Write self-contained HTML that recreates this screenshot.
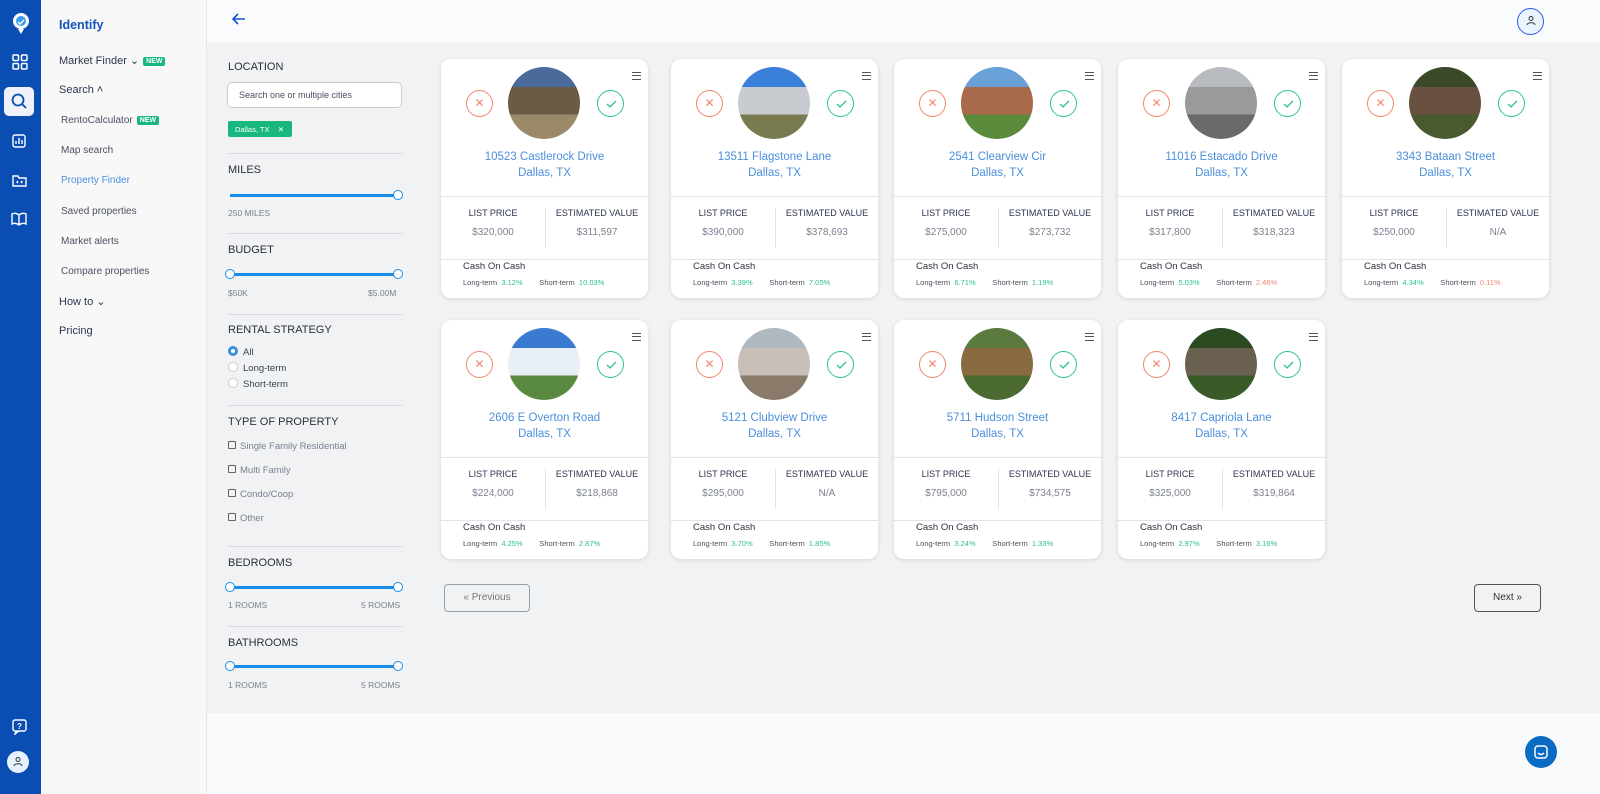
<!DOCTYPE html>
<html><head><meta charset="utf-8"><style>
*{box-sizing:border-box;margin:0;padding:0}
body{width:1600px;height:794px;overflow:hidden;font-family:"Liberation Sans",sans-serif;background:#f9fafc;position:relative}
.abs{position:absolute}
#rail{left:0;top:0;width:41px;height:794px;background:#0a4db3}
#side{left:41px;top:0;width:166px;height:794px;background:#f8f8f8;border-right:1px solid #e6e6e6}
#top{left:207px;top:0;width:1393px;height:43px;background:#fafbfc}
#main{left:207px;top:43px;width:1393px;height:670px;background:#f1f2f4}
.nav{position:absolute;left:18px;font-size:11px;color:#2b3650}
.sub{position:absolute;left:20px;font-size:10px;color:#4a5060}
.new{display:inline-block;background:#17b77e;color:#fff;font-size:7px;font-weight:bold;padding:1px 3px;border-radius:2px;vertical-align:middle;margin-left:4px}
.flt{position:absolute;left:228px;font-size:11px;color:#2a2f3a}
.hr{position:absolute;left:228px;width:174px;height:1px;background:#d9dbe0}
.sl{position:absolute;left:230px;width:168px;height:3px;background:#1a8de8}
.knob{position:absolute;width:10px;height:10px;border-radius:50%;background:#fff;border:1.5px solid #1a8de8}
.sm{position:absolute;font-size:8.5px;color:#7a7f8a}
.opt{position:absolute;left:228px;font-size:9.5px;color:#3a3f4a}
.rad{display:inline-block;width:10px;height:10px;border-radius:50%;border:1px solid #ccc;background:#fff;vertical-align:-1px;margin-right:5px}
.cb{display:inline-block;width:8px;height:8px;border:1px solid #666;border-radius:1px;vertical-align:0;margin-right:4px}
.card{position:absolute;width:207px;height:239px;background:#fff;border-radius:10px;box-shadow:0 1px 4px rgba(0,0,0,.12)}
.card .ph{position:absolute;left:67px;top:8px;width:72px;height:72px;border-radius:50%;background:linear-gradient(var(--c) 0 28%,var(--a) 28% 66%,var(--b) 66%)}
.card .x{position:absolute;left:25px;top:31px;width:27px;height:27px;border-radius:50%;border:1.3px solid #f0866e;color:#f0866e;font-size:12px;text-align:center;line-height:24px}
.card .ok{position:absolute;left:156px;top:31px;width:27px;height:27px;border-radius:50%;border:1.3px solid #2ec28e}
.card .ok svg{position:absolute;left:7px;top:7px}
.card .mn{position:absolute;left:191px;top:13px;width:9px;height:8px;border-top:1.3px solid #555;border-bottom:1.3px solid #555}
.card .mn:after{content:"";position:absolute;left:0;top:2.2px;width:9px;border-top:1.3px solid #555}
.card .ad{position:absolute;left:0;width:207px;top:90px;text-align:center;font-size:11.5px;line-height:16px;color:#4b8fdb}
.card .l1{position:absolute;left:0;width:207px;top:137px;height:1px;background:#e2e3e8}
.card .l2{position:absolute;left:0;width:207px;top:200px;height:1px;background:#e2e3e8}
.card .vd{position:absolute;left:104px;top:149px;width:1px;height:40px;background:#e2e3e8}
.card .lb{position:absolute;top:149px;font-size:9px;color:#2e3450;text-align:center}
.card .vl{position:absolute;top:168px;font-size:10px;color:#7c8190;text-align:center}
.card .cc{position:absolute;left:22px;top:202px;font-size:9.5px;color:#2e3240}
.card .lt{position:absolute;left:22px;top:219px;font-size:7.5px;color:#4a4f5a;white-space:nowrap}
.g{color:#2ebf8a}.r{color:#f0866e}
.btn{position:absolute;height:28px;border:1px solid #9aa0a8;border-radius:4px;background:#f1f2f4;font-size:10px;color:#777;text-align:center;line-height:26px}
</style></head><body>
<div id="rail" class="abs">
 <svg class="abs" style="left:11px;top:12px" width="20" height="24" viewBox="0 0 20 24"><circle cx="10" cy="9" r="8" fill="#fff"/><circle cx="10" cy="9" r="5" fill="#3a9be8"/><path d="M7 10l2 2 4-4" stroke="#fff" stroke-width="1.5" fill="none"/><path d="M7 17l3 5 3-5" fill="#fff"/></svg>
 <svg class="abs" style="left:12px;top:54px" width="16" height="16" fill="none" stroke="#fff" stroke-width="1.5"><rect x="1" y="1" width="5.5" height="5.5" rx="1"/><rect x="9.5" y="1" width="5.5" height="5.5" rx="1"/><rect x="1" y="9.5" width="5.5" height="5.5" rx="1"/><rect x="9.5" y="9.5" width="5.5" height="5.5" rx="1"/></svg>
 <div class="abs" style="left:4px;top:87px;width:30px;height:29px;background:#eef2f8;border-radius:5px"></div>
 <svg class="abs" style="left:11px;top:93px" width="16" height="16" fill="none" stroke="#0a4db3" stroke-width="1.8"><circle cx="7" cy="7" r="5.5"/><path d="M11 11l4 4"/></svg>
 <svg class="abs" style="left:12px;top:134px" width="14" height="14" fill="none" stroke="#fff" stroke-width="1.4"><rect x="1" y="1" width="12" height="12" rx="2"/><path d="M4 10V7M7 10V4M10 10V6"/></svg>
 <svg class="abs" style="left:12px;top:173px" width="15" height="14" fill="none" stroke="#fff" stroke-width="1.4"><path d="M1 3h5l1 2h7v8H1z"/><path d="M6 8l-1 1 1 1M9 8l1 1-1 1"/></svg>
 <svg class="abs" style="left:11px;top:212px" width="16" height="14" fill="none" stroke="#fff" stroke-width="1.4"><path d="M8 3C6 1 3 1 1 2v10c2-1 5-1 7 1 2-2 5-2 7-1V2c-2-1-5-1-7 1zM8 3v10"/></svg>
 <svg class="abs" style="left:12px;top:719px" width="15" height="16" fill="none" stroke="#fff" stroke-width="1.4"><rect x="1" y="1" width="13" height="11" rx="2"/><path d="M4 12l-1 3 4-3"/><text x="5" y="10" font-size="8" fill="#fff" stroke="none" font-family="Liberation Sans" font-weight="bold">?</text></svg>
 <div class="abs" style="left:7px;top:751px;width:22px;height:22px;border-radius:50%;background:#e6f2fd"></div>
 <svg class="abs" style="left:13px;top:756px" width="10" height="11" fill="none" stroke="#333" stroke-width="1"><circle cx="5" cy="3.5" r="2"/><path d="M1 10c0-3 8-3 8 0"/></svg>
</div>
<div id="side" class="abs">
 <div class="nav" style="top:18px;font-size:12.5px;color:#1451b8;font-weight:bold">Identify</div>
 <div class="nav" style="top:54px">Market Finder ⌄<span class="new">NEW</span></div>
 <div class="nav" style="top:84px">Search ˄</div>
 <div class="sub" style="top:115px">RentoCalculator<span class="new">NEW</span></div>
 <div class="sub" style="top:145px">Map search</div>
 <div class="sub" style="top:175px;color:#4b8fdb">Property Finder</div>
 <div class="sub" style="top:206px">Saved properties</div>
 <div class="sub" style="top:236px">Market alerts</div>
 <div class="sub" style="top:266px">Compare properties</div>
 <div class="nav" style="top:295px">How to ⌄</div>
 <div class="nav" style="top:325px">Pricing</div>
</div>
<div id="top" class="abs">
 <svg class="abs" style="left:25px;top:13px" width="14" height="12" fill="none" stroke="#1451d8" stroke-width="1.6"><path d="M13 6H2M6 1L1 6l5 5"/></svg>
 <div class="abs" style="left:1310px;top:8px;width:27px;height:27px;border-radius:50%;border:1.2px solid #2a5ee0;background:#eaf4fe"></div>
 <svg class="abs" style="left:1319px;top:15px" width="10" height="11" fill="none" stroke="#333" stroke-width="1"><circle cx="5" cy="3.5" r="2"/><path d="M1 10c0-3 8-3 8 0"/></svg>
</div>
<div id="main" class="abs"></div>

<div class="flt" style="top:61px">LOCATION</div>
<div class="abs" style="left:227px;top:82px;width:175px;height:26px;background:#fff;border:1px solid #ccc;border-radius:5px;font-size:9px;color:#4a4f60;padding:7px 0 0 11px">Search one or multiple cities</div>
<div class="abs" style="left:228px;top:121px;width:64px;height:16px;background:#17b77e;border-radius:2px;font-size:7.5px;color:#fff;padding:4px 0 0 7px">Dallas, TX &nbsp;&nbsp; ✕</div>
<div class="hr" style="top:153px"></div>
<div class="flt" style="top:164px">MILES</div>
<div class="sl" style="top:194px"></div><div class="knob" style="left:393px;top:190px"></div>
<div class="sm" style="left:228px;top:208px">250 MILES</div>
<div class="hr" style="top:233px"></div>
<div class="flt" style="top:244px">BUDGET</div>
<div class="sl" style="top:273px"></div><div class="knob" style="left:225px;top:269px"></div><div class="knob" style="left:393px;top:269px"></div>
<div class="sm" style="left:228px;top:288px">$50K</div><div class="sm" style="left:368px;top:288px">$5.00M</div>
<div class="hr" style="top:314px"></div>
<div class="flt" style="top:324px">RENTAL STRATEGY</div>
<div class="opt" style="top:346px"><span class="rad" style="border:3px solid #3d8ee0"></span>All</div>
<div class="opt" style="top:362px"><span class="rad"></span>Long-term</div>
<div class="opt" style="top:378px"><span class="rad"></span>Short-term</div>
<div class="hr" style="top:405px"></div>
<div class="flt" style="top:416px">TYPE OF PROPERTY</div>
<div class="opt" style="top:441px;color:#7a7f90"><span class="cb"></span>Single Family Residential</div>
<div class="opt" style="top:465px;color:#7a7f90"><span class="cb"></span>Multi Family</div>
<div class="opt" style="top:489px;color:#7a7f90"><span class="cb"></span>Condo/Coop</div>
<div class="opt" style="top:513px;color:#7a7f90"><span class="cb"></span>Other</div>
<div class="hr" style="top:546px"></div>
<div class="flt" style="top:557px">BEDROOMS</div>
<div class="sl" style="top:586px"></div><div class="knob" style="left:225px;top:582px"></div><div class="knob" style="left:393px;top:582px"></div>
<div class="sm" style="left:228px;top:600px">1 ROOMS</div><div class="sm" style="left:361px;top:600px">5 ROOMS</div>
<div class="hr" style="top:626px"></div>
<div class="flt" style="top:637px">BATHROOMS</div>
<div class="sl" style="top:665px"></div><div class="knob" style="left:225px;top:661px"></div><div class="knob" style="left:393px;top:661px"></div>
<div class="sm" style="left:228px;top:680px">1 ROOMS</div><div class="sm" style="left:361px;top:680px">5 ROOMS</div>

<div class="card" style="left:441px;top:59px;--a:#6b5a44;--b:#9a8a6a;--c:#4a6a9a"><div class="ph"></div><div class="x">✕</div><div class="ok"><svg width="12" height="12" fill="none" stroke="#2ec28e" stroke-width="1.3"><path d="M2 6l3 3 6-6"/></svg></div><div class="mn"></div><div class="ad">10523 Castlerock Drive<br>Dallas, TX</div><div class="l1"></div><div class="vd"></div><div class="lb" style="left:0;width:104px">LIST PRICE</div><div class="lb" style="left:105px;width:102px">ESTIMATED VALUE</div><div class="vl" style="left:0;width:104px">$320,000</div><div class="vl" style="left:105px;width:102px">$311,597</div><div class="l2"></div><div class="cc">Cash On Cash</div><div class="lt">Long-term &nbsp;<span class="g">3.12%</span>&nbsp;&nbsp;&nbsp;&nbsp;&nbsp;&nbsp;&nbsp;&nbsp;Short-term &nbsp;<span class="g">10.03%</span></div></div>
<div class="card" style="left:671px;top:59px;--a:#c8ccd0;--b:#7a7a50;--c:#3a80d8"><div class="ph"></div><div class="x">✕</div><div class="ok"><svg width="12" height="12" fill="none" stroke="#2ec28e" stroke-width="1.3"><path d="M2 6l3 3 6-6"/></svg></div><div class="mn"></div><div class="ad">13511 Flagstone Lane<br>Dallas, TX</div><div class="l1"></div><div class="vd"></div><div class="lb" style="left:0;width:104px">LIST PRICE</div><div class="lb" style="left:105px;width:102px">ESTIMATED VALUE</div><div class="vl" style="left:0;width:104px">$390,000</div><div class="vl" style="left:105px;width:102px">$378,693</div><div class="l2"></div><div class="cc">Cash On Cash</div><div class="lt">Long-term &nbsp;<span class="g">3.39%</span>&nbsp;&nbsp;&nbsp;&nbsp;&nbsp;&nbsp;&nbsp;&nbsp;Short-term &nbsp;<span class="g">7.05%</span></div></div>
<div class="card" style="left:894px;top:59px;--a:#a86a4a;--b:#5a8a3a;--c:#6aa0d8"><div class="ph"></div><div class="x">✕</div><div class="ok"><svg width="12" height="12" fill="none" stroke="#2ec28e" stroke-width="1.3"><path d="M2 6l3 3 6-6"/></svg></div><div class="mn"></div><div class="ad">2541 Clearview Cir<br>Dallas, TX</div><div class="l1"></div><div class="vd"></div><div class="lb" style="left:0;width:104px">LIST PRICE</div><div class="lb" style="left:105px;width:102px">ESTIMATED VALUE</div><div class="vl" style="left:0;width:104px">$275,000</div><div class="vl" style="left:105px;width:102px">$273,732</div><div class="l2"></div><div class="cc">Cash On Cash</div><div class="lt">Long-term &nbsp;<span class="g">6.71%</span>&nbsp;&nbsp;&nbsp;&nbsp;&nbsp;&nbsp;&nbsp;&nbsp;Short-term &nbsp;<span class="g">1.19%</span></div></div>
<div class="card" style="left:1118px;top:59px;--a:#9a9a98;--b:#6a6a68;--c:#b8bcc0"><div class="ph"></div><div class="x">✕</div><div class="ok"><svg width="12" height="12" fill="none" stroke="#2ec28e" stroke-width="1.3"><path d="M2 6l3 3 6-6"/></svg></div><div class="mn"></div><div class="ad">11016 Estacado Drive<br>Dallas, TX</div><div class="l1"></div><div class="vd"></div><div class="lb" style="left:0;width:104px">LIST PRICE</div><div class="lb" style="left:105px;width:102px">ESTIMATED VALUE</div><div class="vl" style="left:0;width:104px">$317,800</div><div class="vl" style="left:105px;width:102px">$318,323</div><div class="l2"></div><div class="cc">Cash On Cash</div><div class="lt">Long-term &nbsp;<span class="g">5.03%</span>&nbsp;&nbsp;&nbsp;&nbsp;&nbsp;&nbsp;&nbsp;&nbsp;Short-term &nbsp;<span class="r">2.46%</span></div></div>
<div class="card" style="left:1342px;top:59px;--a:#6a5040;--b:#4a5a30;--c:#3a4a28"><div class="ph"></div><div class="x">✕</div><div class="ok"><svg width="12" height="12" fill="none" stroke="#2ec28e" stroke-width="1.3"><path d="M2 6l3 3 6-6"/></svg></div><div class="mn"></div><div class="ad">3343 Bataan Street<br>Dallas, TX</div><div class="l1"></div><div class="vd"></div><div class="lb" style="left:0;width:104px">LIST PRICE</div><div class="lb" style="left:105px;width:102px">ESTIMATED VALUE</div><div class="vl" style="left:0;width:104px">$250,000</div><div class="vl" style="left:105px;width:102px">N/A</div><div class="l2"></div><div class="cc">Cash On Cash</div><div class="lt">Long-term &nbsp;<span class="g">4.34%</span>&nbsp;&nbsp;&nbsp;&nbsp;&nbsp;&nbsp;&nbsp;&nbsp;Short-term &nbsp;<span class="r">0.11%</span></div></div>
<div class="card" style="left:441px;top:320px;--a:#e8eef5;--b:#5a8a40;--c:#3a7ad0"><div class="ph"></div><div class="x">✕</div><div class="ok"><svg width="12" height="12" fill="none" stroke="#2ec28e" stroke-width="1.3"><path d="M2 6l3 3 6-6"/></svg></div><div class="mn"></div><div class="ad">2606 E Overton Road<br>Dallas, TX</div><div class="l1"></div><div class="vd"></div><div class="lb" style="left:0;width:104px">LIST PRICE</div><div class="lb" style="left:105px;width:102px">ESTIMATED VALUE</div><div class="vl" style="left:0;width:104px">$224,000</div><div class="vl" style="left:105px;width:102px">$218,868</div><div class="l2"></div><div class="cc">Cash On Cash</div><div class="lt">Long-term &nbsp;<span class="g">4.25%</span>&nbsp;&nbsp;&nbsp;&nbsp;&nbsp;&nbsp;&nbsp;&nbsp;Short-term &nbsp;<span class="g">2.87%</span></div></div>
<div class="card" style="left:671px;top:320px;--a:#c8c0b8;--b:#8a7a6a;--c:#b0b8c0"><div class="ph"></div><div class="x">✕</div><div class="ok"><svg width="12" height="12" fill="none" stroke="#2ec28e" stroke-width="1.3"><path d="M2 6l3 3 6-6"/></svg></div><div class="mn"></div><div class="ad">5121 Clubview Drive<br>Dallas, TX</div><div class="l1"></div><div class="vd"></div><div class="lb" style="left:0;width:104px">LIST PRICE</div><div class="lb" style="left:105px;width:102px">ESTIMATED VALUE</div><div class="vl" style="left:0;width:104px">$295,000</div><div class="vl" style="left:105px;width:102px">N/A</div><div class="l2"></div><div class="cc">Cash On Cash</div><div class="lt">Long-term &nbsp;<span class="g">3.70%</span>&nbsp;&nbsp;&nbsp;&nbsp;&nbsp;&nbsp;&nbsp;&nbsp;Short-term &nbsp;<span class="g">1.85%</span></div></div>
<div class="card" style="left:894px;top:320px;--a:#8a6a40;--b:#4a6a30;--c:#5a7a40"><div class="ph"></div><div class="x">✕</div><div class="ok"><svg width="12" height="12" fill="none" stroke="#2ec28e" stroke-width="1.3"><path d="M2 6l3 3 6-6"/></svg></div><div class="mn"></div><div class="ad">5711 Hudson Street<br>Dallas, TX</div><div class="l1"></div><div class="vd"></div><div class="lb" style="left:0;width:104px">LIST PRICE</div><div class="lb" style="left:105px;width:102px">ESTIMATED VALUE</div><div class="vl" style="left:0;width:104px">$795,000</div><div class="vl" style="left:105px;width:102px">$734,575</div><div class="l2"></div><div class="cc">Cash On Cash</div><div class="lt">Long-term &nbsp;<span class="g">3.24%</span>&nbsp;&nbsp;&nbsp;&nbsp;&nbsp;&nbsp;&nbsp;&nbsp;Short-term &nbsp;<span class="g">1.33%</span></div></div>
<div class="card" style="left:1118px;top:320px;--a:#6a6050;--b:#3a5a28;--c:#2a4a20"><div class="ph"></div><div class="x">✕</div><div class="ok"><svg width="12" height="12" fill="none" stroke="#2ec28e" stroke-width="1.3"><path d="M2 6l3 3 6-6"/></svg></div><div class="mn"></div><div class="ad">8417 Capriola Lane<br>Dallas, TX</div><div class="l1"></div><div class="vd"></div><div class="lb" style="left:0;width:104px">LIST PRICE</div><div class="lb" style="left:105px;width:102px">ESTIMATED VALUE</div><div class="vl" style="left:0;width:104px">$325,000</div><div class="vl" style="left:105px;width:102px">$319,864</div><div class="l2"></div><div class="cc">Cash On Cash</div><div class="lt">Long-term &nbsp;<span class="g">2.97%</span>&nbsp;&nbsp;&nbsp;&nbsp;&nbsp;&nbsp;&nbsp;&nbsp;Short-term &nbsp;<span class="g">3.16%</span></div></div>

<div class="btn" style="left:444px;top:584px;width:86px">« Previous</div>
<div class="btn" style="left:1474px;top:584px;width:67px;border-color:#555;color:#333">Next »</div>
<div class="abs" style="left:1525px;top:736px;width:32px;height:32px;border-radius:50%;background:#0a6bc2"></div>
<svg class="abs" style="left:1534px;top:745px" width="14" height="14" fill="none" stroke="#fff" stroke-width="1.5"><rect x="1" y="1" width="12" height="12" rx="3"/><path d="M4 8c2 2 4 2 6 0"/></svg>
</body></html>
